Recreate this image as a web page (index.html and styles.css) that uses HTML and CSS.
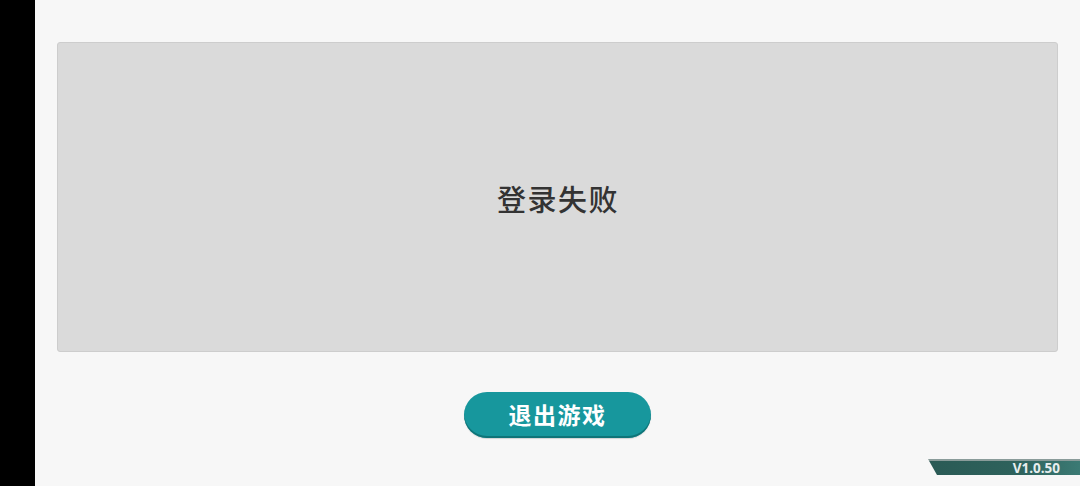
FILE: index.html
```html
<!DOCTYPE html>
<html lang="zh">
<head>
<meta charset="utf-8">
<link rel="stylesheet" href="styles.css">
</head>
<body>
<div class="screen">
  <div class="notch"></div>
  <main class="main">
    <section class="panel">
      <p class="message">登录失败</p>
    </section>
    <button class="exit">退出游戏</button>
    <div class="version">V1.0.50</div>
  </main>
</div>
</body>
</html>
```
FILE: styles.css
```css
* { box-sizing: border-box; }
html, body { margin: 0; padding: 0; }
body {
  width: 1080px;
  height: 486px;
  overflow: hidden;
  background: #f7f7f7;
  font-family: "Noto Sans CJK SC", "Noto Sans", sans-serif;
}
.screen {
  display: flex;
  height: 486px;
}
.notch {
  width: 35px;
  background: #000;
  flex: none;
}
.main {
  position: relative;
  flex: 1;
  display: flex;
  flex-direction: column;
  padding: 42px 0 0 22px;
}
.panel {
  width: 1001px;
  height: 310px;
  background: #dadada;
  border: 1px solid #cdcdcd;
  border-radius: 3px;
  display: flex;
  align-items: center;
  justify-content: center;
}
.message {
  margin: 2px 0 0 1px;
  font-size: 29px;
  font-weight: 500;
  color: #333;
  letter-spacing: 1.5px;
}
.exit {
  align-self: flex-start;
  margin: 40px 0 0 407px;
  width: 187px;
  height: 46px;
  border: none;
  border-radius: 23px;
  background: #17979d;
  box-shadow: inset 0 -2px 0 #0f7478, 0 1px 1px rgba(0,0,0,0.15);
  color: #fff;
  font-family: "Noto Sans CJK SC", sans-serif;
  font-weight: 700;
  font-size: 23px;
  padding: 0 0 2px;
  letter-spacing: 1.5px;
}
.version {
  position: absolute;
  right: 0;
  top: 459px;
  width: 152px;
  height: 16px;
  background: linear-gradient(90deg, #2a5a55 0%, #2e625c 60%, #3b7a74 100%);
  border-top: 2px solid #8a9c9a;
  clip-path: polygon(0 0, 100% 0, 100% 100%, 9px 100%);
  color: #e8eeee;
  font-family: "Open Sans", "Noto Sans", sans-serif;
  font-weight: 700;
  font-size: 13.5px;
  line-height: 14px;
  text-align: right;
  padding-right: 20px;
}
```
